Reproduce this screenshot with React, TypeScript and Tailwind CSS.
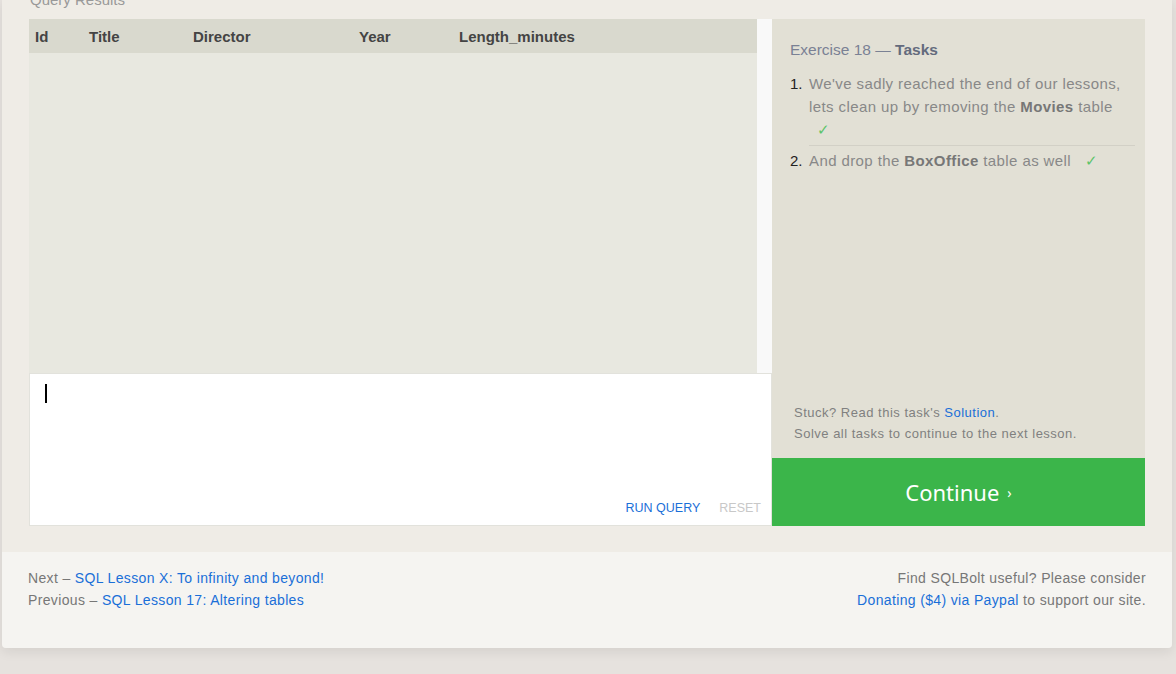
import React from "react";

export default function App() {
  const font = { fontFamily: '"Liberation Sans", Arial, sans-serif' };
  const noto = { fontFamily: '"Noto Sans", "Liberation Sans", Arial, sans-serif' };
  return (
    <div className="w-[1176px] h-[674px] overflow-hidden bg-[#e6e2de]" style={font}>
      <div className="mx-[2px] w-[1170px] rounded-b-[4px] shadow-[0_4px_12px_rgba(0,0,0,0.08)] overflow-hidden">
        <div className="bg-[#efece6] px-[27px] pb-[26px] pt-[19px] relative">
          <div className="absolute left-[28px] top-[-11px] text-[15px] text-[#999]">Query Results</div>
          <div className="flex">
            <div className="w-[743px] flex flex-col">
              <div className="flex h-[354px]">
                <div className="w-[728px] bg-[#e8e8e0] flex flex-col">
                  <div className="h-[34px] bg-[#d9d9ce] text-[15px] font-bold text-[#444] relative">
                    <span className="absolute left-[6px] top-[7px]">Id</span>
                    <span className="absolute left-[60px] top-[7px]">Title</span>
                    <span className="absolute left-[164px] top-[7px]">Director</span>
                    <span className="absolute left-[330px] top-[7px]">Year</span>
                    <span className="absolute left-[430px] top-[7px]">Length_minutes</span>
                  </div>
                </div>
                <div className="w-[15px] bg-[#f9f9f9]"></div>
              </div>
              <div className="h-[153px] bg-white border border-[#e2e2dc] relative">
                <div className="absolute left-[15px] top-[10px] w-[2px] h-[19px] bg-black"></div>
                <div className="absolute right-[10px] bottom-[7px] flex gap-[19px] text-[12.5px]">
                  <span className="text-[#1a6fd8]">RUN QUERY</span>
                  <span className="text-[#c8c8c8]">RESET</span>
                </div>
              </div>
            </div>
            <div className="w-[373px] flex flex-col">
              <div className="h-[439px] bg-[#e2e0d5] pl-[18px] pr-[10px] pt-[19px] flex flex-col">
                <div className="text-[15.5px] leading-[24px] text-[#7a8194]">
                  Exercise 18 — <span className="font-semibold text-[#646b7d]">Tasks</span>
                </div>
                <ol className="mt-[10px] text-[15px] text-[#888] leading-[23px] tracking-[0.4px]">
                  <li className="flex">
                    <span className="w-[19px] text-[#222] tracking-normal">1.</span>
                    <div className="flex-1 border-b border-[#d2d0c6] pb-[4px]">
                      We've sadly reached the end of our lessons, lets clean up by removing the{" "}
                      <b className="text-[#777]">Movies</b> table
                      <br />
                      <span className="ml-[8px] text-[#5cc46a]">✓</span>
                    </div>
                  </li>
                  <li className="flex mt-[3px]">
                    <span className="w-[19px] text-[#222] tracking-normal">2.</span>
                    <div className="flex-1">
                      And drop the <b className="text-[#777]">BoxOffice</b> table as well
                      <span className="ml-[14px] text-[#5cc46a]">✓</span>
                    </div>
                  </li>
                </ol>
                <div className="mt-auto mb-[14px] pl-[4px] text-[13px] text-[#808080] leading-[21px] tracking-[0.5px]">
                  <div>
                    Stuck? Read this task's <span className="text-[#1a6fd8]">Solution</span>.
                  </div>
                  <div>Solve all tasks to continue to the next lesson.</div>
                </div>
              </div>
              <div className="h-[68px] bg-[#3bb54a] flex items-center justify-center text-white text-[22px]" style={noto}>
                Continue <span className="ml-[8px] text-[14px]">›</span>
              </div>
            </div>
          </div>
        </div>
        <div className="h-[96px] bg-[#f5f4f1] px-[26px] pt-[15px] flex justify-between text-[14px] leading-[22px] text-[#777] tracking-[0.35px]">
          <div>
            <div>
              Next – <span className="text-[#1a6fd8]">SQL Lesson X: To infinity and beyond!</span>
            </div>
            <div>
              Previous – <span className="text-[#1a6fd8]">SQL Lesson 17: Altering tables</span>
            </div>
          </div>
          <div className="text-right">
            <div>Find SQLBolt useful? Please consider</div>
            <div>
              <span className="text-[#1a6fd8]">Donating ($4) via Paypal</span> to support our site.
            </div>
          </div>
        </div>
      </div>
    </div>
  );
}
